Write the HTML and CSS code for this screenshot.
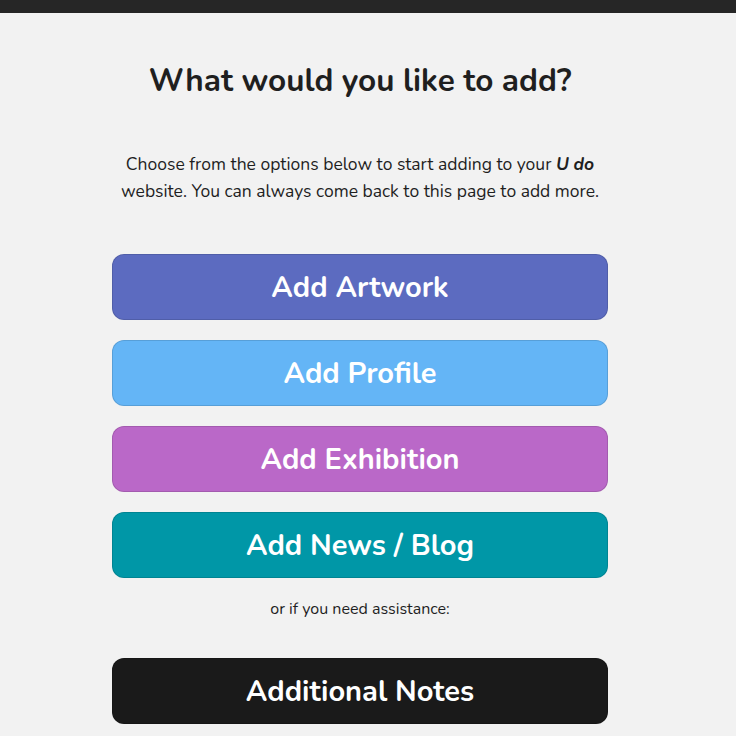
FILE: index.html
```html
<!DOCTYPE html>
<html lang="en">
<head>
  <meta charset="UTF-8" />
  <meta name="viewport" content="width=device-width, initial-scale=1.0" />
  <title>What would you like to add?</title>
  <link rel="stylesheet" href="styles.css">
</head>
<body>
  <div class="topbar"></div>

  <div class="container">
    <h2>What would you like to add?</h2>

    <p class="intro">
      Choose from the options below to start adding to your <b><i>U do</i></b>
      website. You can always come back to this page to add more.
    </p>

    <!-- Secenekler -->
    <div class="options">
      <a class="option artwork" href="#">Add Artwork</a>
      <a class="option profile" href="#">Add Profile</a>
      <a class="option exhibition" href="#">Add Exhibition</a>
      <a class="option news" href="#">Add News / Blog</a>
    </div>

    <p class="help">or if you need assistance:</p>

    <a class="option notes" href="#">Additional Notes</a>
  </div>
</body>
</html>
```

FILE: styles.css
```css
/* Genel sayfa */
body {
  margin: 0;
  background: #f2f2f2;
  color: #1f1f1f;
  font-family: "Nunito", Lato, "Open Sans", sans-serif;
}

.topbar {
  height: 13px;
  background: #262626;
}

/* Icerik */
.container {
  width: 496px;
  margin: 0 128px 0 112px;
  padding-top: 47px;
  text-align: center;
}

h2 {
  margin: 0;
  font-size: 31.5px;
  line-height: 42px;
  font-weight: 700;
}

.intro {
  margin: 49px 0 0;
  font-size: 17.5px;
  line-height: 27px;
}

/* Buton listesi */
.options {
  display: flex;
  flex-direction: column;
  gap: 20px;
  margin-top: 49px;
}

.option {
  display: flex;
  align-items: center;
  justify-content: center;
  height: 64px;
  border: 1px solid rgba(0, 0, 0, 0.12);
  border-radius: 12px;
  color: #fff;
  font-size: 29px;
  font-weight: 700;
  text-decoration: none;
}

.artwork { background: #5c6bc0; }
.profile { background: #64b5f6; }
.exhibition { background: #ba68c8; }
.news { background: #0097a7; }
.notes { background: #1a1a1a; }

.help {
  margin: 21px 0 39px;
  font-size: 16px;
  line-height: 20px;
}
```
